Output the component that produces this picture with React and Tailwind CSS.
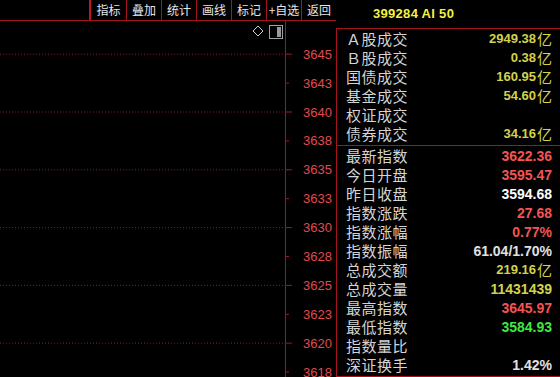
import React from 'react';

const TOOLS = ['指标', '叠加', '统计', '画线', '标记', '+自选', '返回'];

const AXIS = ['3645', '3643', '3640', '3638', '3635', '3633', '3630', '3628', '3625', '3623', '3620', '3618'];

const TRADE_ROWS = [
  { label: 'Ａ股成交', value: '2949.38', unit: '亿', color: 'text-[#d2d24c]' },
  { label: 'Ｂ股成交', value: '0.38', unit: '亿', color: 'text-[#d2d24c]' },
  { label: '国债成交', value: '160.95', unit: '亿', color: 'text-[#d2d24c]' },
  { label: '基金成交', value: '54.60', unit: '亿', color: 'text-[#d2d24c]' },
  { label: '权证成交', value: '', unit: '', color: '' },
  { label: '债券成交', value: '34.16', unit: '亿', color: 'text-[#d2d24c]' },
];

const INDEX_ROWS = [
  { label: '最新指数', value: '3622.36', color: 'text-[#f25454]' },
  { label: '今日开盘', value: '3595.47', color: 'text-[#f25454]' },
  { label: '昨日收盘', value: '3594.68', color: 'text-white' },
  { label: '指数涨跌', value: '27.68', color: 'text-[#f25454]' },
  { label: '指数涨幅', value: '0.77%', color: 'text-[#f25454]' },
  { label: '指数振幅', value: '61.04/1.70%', color: 'text-[#e0e0e0]' },
  { label: '总成交额', value: '219.16', unit: '亿', color: 'text-[#d2d24c]' },
  { label: '总成交量', value: '11431439', color: 'text-[#d2d24c]' },
  { label: '最高指数', value: '3645.97', color: 'text-[#f25454]' },
  { label: '最低指数', value: '3584.93', color: 'text-[#3ee83e]' },
  { label: '指数量比', value: '', color: '' },
  { label: '深证换手', value: '1.42%', color: 'text-[#e0e0e0]' },
];

const LINE = '#a8141c';

function Row({ label, value, unit, color }) {
  // values with 亿 use the smaller face, the rest are wider digits
  const valueCls = unit ? 'text-[13px]' : 'text-[14px]';
  return (
    <div className="h-[19px] flex items-center justify-between pl-[9px] pr-[8px]">
      <span className="text-[15px] tracking-[0.5px] text-[#d4d4d4] leading-none">{label}</span>
      <span className={`flex items-center leading-none ${color}`}>
        <span className={`${valueCls} font-bold font-['Liberation_Sans',sans-serif]`}>{value}</span>
        {unit && <span className="text-[15px] ml-[1px]">{unit}</span>}
      </span>
    </div>
  );
}

function Chart() {
  const top = 32.7;
  const step = 28.9;
  return (
    <svg width="336" height="357" className="block">
      {AXIS.map((v, i) => {
        const y = top + step * i;
        const major = i % 2 === 0;
        return (
          <g key={v}>
            {major && (
              <line x1="0" y1={y + 0.5} x2="284" y2={y + 0.5} stroke="#8a1c24" strokeWidth="1" strokeDasharray="1 2" />
            )}
            <line x1="285" y1={y + 0.5} x2={major ? 292 : 289} y2={y + 0.5} stroke={LINE} strokeWidth="1" />
            <text x="303" y={y + 5} fill="#e04a50" fontSize="13" fontFamily="'Liberation Sans', sans-serif">
              {v}
            </text>
          </g>
        );
      })}
      <line x1="285.5" y1="0" x2="285.5" y2="357" stroke={LINE} strokeWidth="1" />
      <path d="M258 5 L263 10 L258 15 L253 10 Z" fill="none" stroke="#d0d0d0" strokeWidth="1" />
      <rect x="269.5" y="4.5" width="13" height="13" fill="none" stroke="#a0a0a0" strokeWidth="1" />
      <rect x="277" y="6" width="4" height="10" fill="#9a9a9a" />
    </svg>
  );
}

export default function App() {
  return (
    <div className="w-[560px] h-[377px] bg-black flex overflow-hidden font-['Noto_Sans_CJK_SC','Noto_Sans',sans-serif]">
      <div className="w-[336px] flex flex-col">
        <div className="h-[21px] flex justify-end border-b border-[#a8141c]">
          <div className="flex border-l-2 border-[#c0181e]">
            {TOOLS.map((t, i) => (
              <div
                key={t}
                className={`w-[35px] flex items-center justify-center text-[12px] text-[#e6e6e6] leading-none ${
                  i > 0 ? 'border-l border-[#a8141c]' : ''
                }`}
              >
                {t}
              </div>
            ))}
          </div>
        </div>
        <Chart />
      </div>

      <div className="w-[224px] flex flex-col">
        <div className="h-[29px] flex items-center pl-[37px] border-b border-[#a8141c]">
          <span className="text-[13px] font-bold text-[#f2f240] font-['Liberation_Sans',sans-serif] tracking-[0.3px]">
            399284 AI 50
          </span>
        </div>
        <div className="flex-1 border-l border-[#a8141c] border-b flex flex-col">
          <div className="pb-[2px] border-b border-[#a8141c]">
            {TRADE_ROWS.map((r) => (
              <Row key={r.label} {...r} />
            ))}
          </div>
          <div>
            {INDEX_ROWS.map((r) => (
              <Row key={r.label} {...r} />
            ))}
          </div>
        </div>
      </div>
    </div>
  );
}
